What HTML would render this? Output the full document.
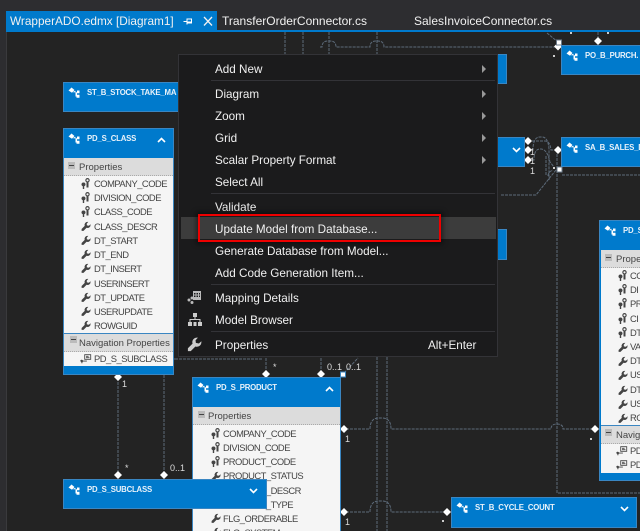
<!DOCTYPE html>
<html><head><meta charset="utf-8"><style>
html,body{margin:0;padding:0;background:#232323}
#r{position:relative;width:640px;height:531px;overflow:hidden;background:#232323;font-family:"Liberation Sans",sans-serif}
#r div,#r svg{position:absolute}
.top{left:0;top:0;width:640px;height:32px;background:#2d2d30}
.tl{left:0;top:32px;width:7px;height:499px;background:#2d2d30}
.tb{top:11px;height:20px;line-height:21px;font-size:12px;color:#f1f1f1;white-space:nowrap}
.e{background:#007acc;border:1px solid #3a86c2;box-sizing:border-box;overflow:hidden}
.t{left:23px;top:4px;font-weight:bold;font-size:7.800px;letter-spacing:-.2px;line-height:12px;color:#e8f2fa;white-space:nowrap}
.b{left:0;right:0;background:#f5f5f5}
.band{left:0;right:0;background:#dcdcdc;height:18px;color:#444;font-size:9.500px;line-height:19px;white-space:nowrap;border-bottom:1px dotted #aaa;box-sizing:border-box;padding-left:15px}
.row{color:#444;font-size:9.400px;line-height:14px;height:14px;white-space:nowrap;letter-spacing:-.5px}
.ic{width:10px;height:11px;fill:#444}
.m{left:178px;top:54px;width:320px;height:303px;background:#1b1b1c;border:1px solid #333337;box-sizing:border-box}
.mi{left:215px;margin-top:1px;color:#f1f1f1;font-size:11.700px;line-height:16px;height:16px;white-space:nowrap}
.sep{left:211px;width:284px;height:1px;background:#333337}
.ar{left:482px;width:0;height:0;border-left:4px solid #999;border-top:4px solid transparent;border-bottom:4px solid transparent}
.lb{color:#ddd;font-size:9px;line-height:10px;white-space:nowrap}
</style></head><body><div id="r">
<svg width="0" height="0"><defs>
<symbol id="w" viewBox="0 0 10 10"><path d="M6.600 .4a3 3 0 0 0-2.900 4L.6 7.500v1.900h1.900L5.600 6.300a3 3 0 0 0 4-2.900V2.800L7.900 4.300 5.900 3.900 5.700 2.200 7.300 .4z"/></symbol>
<symbol id="k" viewBox="0 0 10 11"><path d="M6.500 0a2.300 2.300 0 0 1 1 4.300V9.500H5.500V4.300A2.300 2.300 0 0 1 6.500 0zm0 1.200a1.100 1.100 0 1 0 0 2.200 1.100 1.100 0 0 0 0-2.200zM2.500 4.500a1.900 1.900 0 0 1 .7 3.700V11H1.800V8.200A1.900 1.900 0 0 1 2.500 4.500z"/></symbol>
<symbol id="n" viewBox="0 0 14 11"><path d="M5 .5h8v6.500H5zM6 1.500v4.500h6V1.500zM7 2.500h3v1H7zM7 4h4v1H7z M.5 7.500a1.800 1.800 0 0 1 3 .5H8v1H3.500a1.800 1.800 0 0 1-.7.700V11H1.600V9.600A1.800 1.800 0 0 1 .5 7.500z"/></symbol>
<symbol id="en" viewBox="0 0 12 12"><path fill="#fff" d="M3.500 .5L6.500 3 4 5.800 .5 3.500zM5.500 4.500l2-.7v1.400h1.500V3.500h2.500v2.800H9v1.500h2.500v3H8.500V9.500H7.500v-4.400L5.500 5.500z"/></symbol>
</defs></svg>
<div class="top"></div><div class="tl"></div>
<div style="left:6px;top:32px;width:1px;height:499px;background:#3a3a3d"></div>
<div style="left:6px;top:11px;width:211px;height:21px;background:#007acc"></div>
<div style="left:217px;top:30px;width:423px;height:2px;background:#007acc"></div>
<div class="tb" style="left:10px;font-size:11.800px">WrapperADO.edmx [Diagram1]</div>
<svg style="left:183px;top:16px" width="10" height="11" fill="none" stroke="#fff"><path d="M.5 5.500H4M4 2.500V8.500M4 3h4.500V7H4M4.500 6H8.500"/></svg>
<svg style="left:202px;top:16px" width="12" height="11" fill="none" stroke="#f1f1f1" stroke-width="1.300"><path d="M2 1l8 8.500M10 1L2 9.500"/></svg>
<div class="tb" style="left:222px">TransferOrderConnector.cs</div>
<div class="tb" style="left:414px">SalesInvoiceConnector.cs</div>

<svg style="left:0;top:0" width="640" height="531" fill="none" stroke="#5d6b7a" stroke-width="1" stroke-dasharray="3 1">
<path d="M285 32V54M303 32V54M329 32V54M377 32V54"/>
<path d="M320 47h2q0-6 6-6h2q6 0 6 6H370q0-6 6-6h2q6 0 6 6H556"/>
<path d="M547 33L559 43"/><path d="M598 32V40"/>
<path d="M532 141H545q5 0 6 9h4"/>
<path d="M532 150H533q0-13 7-13h2q6 0 7 12V180M532 160H534q0-11 6-11h1q6 0 9 13l4 5"/>
<path d="M546 156V176M557 150V493H640M562 175H640"/>
<path d="M556 170L536 195H500M548 176q0-4 5-6"/>
<path d="M118 378V475M164 359V475M164 359H178"/>
<path d="M175 359H262M266 358V372M321 358V372M344 373L358 358M377 357V531M387 357V531"/>
<path d="M346 429H370q0-11 9-11h3q9 0 9 11H551q0-5 6-5t6 5H593"/>
<path d="M346 512H370q0-11 9-11h3q9 0 9 11H445"/>
</svg>
<svg style="left:0;top:0" width="640" height="531" fill="#fff">
<path id="d" d="M558 42.500l4 4-4 4-4-4zM598 37l4 4-4 4-4-4zM528 137l4 4-4 4-4-4zM528 146l4 4-4 4-4-4zM528 156l4 4-4 4-4-4zM558 146l4 4-4 4-4-4zM118 373l4 4-4 4-4-4zM118 471l4 4-4 4-4-4zM164 471l4 4-4 4-4-4zM266 370l4 4-4 4-4-4zM321 370l4 4-4 4-4-4zM344 425l4 4-4 4-4-4zM344 508l4 4-4 4-4-4zM595 425l4 4-4 4-4-4zM447 508l4 4-4 4-4-4z"/>
<rect x="556.500" y="40" width="5" height="5" stroke="#6d7c8c"/><rect x="557" y="167" width="5" height="5" stroke="#6d7c8c"/><rect x="340.500" y="372" width="5" height="5" stroke="#3a86c2"/>
<path d="M553 55h2v2h-2zM570 32h2v2h-2zM607 32h2v2h-2zM553 167h2v2h-2zM590 438h2v2h-2zM442 520h2v2h-2z" fill="#ccc"/>
</svg>
<div class="lb" style="left:122px;top:379px">1</div><div class="lb" style="left:125px;top:463px">*</div><div class="lb" style="left:170px;top:463px">0..1</div>
<div class="lb" style="left:273px;top:362px">*</div><div class="lb" style="left:327px;top:362px">0..1</div><div class="lb" style="left:346px;top:362px">0..1</div>
<div class="lb" style="left:345px;top:434px">1</div><div class="lb" style="left:345px;top:517px">1</div>
<div class="lb" style="left:530px;top:147px">1</div><div class="lb" style="left:530px;top:156px">1</div><div class="lb" style="left:530px;top:166px">1</div>

<div class="e" style="left:63px;top:82px;width:118px;height:30px"><svg style="left:4px;top:4px" width="12" height="12"><use href="#en"/></svg><div class="t">ST_B_STOCK_TAKE_MA</div></div>
<div class="e" style="left:63px;top:128px;width:111px;height:247px"><svg style="left:4px;top:4px" width="12" height="12"><use href="#en"/></svg><div class="t">PD_S_CLASS</div>
<svg style="left:93px;top:8px" width="9" height="6" fill="none" stroke="#fff" stroke-width="1.600"><path d="M1 5l3.500-3.500L8 5"/></svg>
<div class="b" style="top:29px;height:208px"></div>
<div class="band" style="top:29px">Properties</div>
<svg style="left:4px;top:33px" width="7" height="7"><rect width="7" height="7" fill="#bbb"/><rect x="1" y="3" width="5" height="1" fill="#444"/></svg>
</div>
<div style="left:64px;top:333px;width:109px;height:1px;background:#3a86c2"></div>
<div class="band" style="left:64px;top:334px;width:109px;right:auto">Navigation Properties</div>
<svg style="left:70px;top:336px" width="7" height="7"><rect width="7" height="7" fill="#bbb"/><rect x="1" y="3" width="5" height="1" fill="#444"/></svg>
<div class="row" style="left:94px;top:177px">COMPANY_CODE</div>
<div class="row" style="left:94px;top:191px">DIVISION_CODE</div>
<div class="row" style="left:94px;top:205px">CLASS_CODE</div>
<div class="row" style="left:94px;top:220px">CLASS_DESCR</div>
<div class="row" style="left:94px;top:234px">DT_START</div>
<div class="row" style="left:94px;top:248px">DT_END</div>
<div class="row" style="left:94px;top:262px">DT_INSERT</div>
<div class="row" style="left:94px;top:277px">USERINSERT</div>
<div class="row" style="left:94px;top:291px">DT_UPDATE</div>
<div class="row" style="left:94px;top:305px">USERUPDATE</div>
<div class="row" style="left:94px;top:319px">ROWGUID</div>
<div class="row" style="left:94px;top:352px">PD_S_SUBCLASS</div>
<svg class="ic" style="left:81px;top:178px"><use href="#k"/></svg><svg class="ic" style="left:81px;top:192px"><use href="#k"/></svg><svg class="ic" style="left:81px;top:206px"><use href="#k"/></svg>
<svg class="ic" style="left:81px;top:221px"><use href="#w"/></svg><svg class="ic" style="left:81px;top:235px"><use href="#w"/></svg><svg class="ic" style="left:81px;top:249px"><use href="#w"/></svg><svg class="ic" style="left:81px;top:263px"><use href="#w"/></svg><svg class="ic" style="left:81px;top:278px"><use href="#w"/></svg><svg class="ic" style="left:81px;top:292px"><use href="#w"/></svg><svg class="ic" style="left:81px;top:306px"><use href="#w"/></svg><svg class="ic" style="left:81px;top:320px"><use href="#w"/></svg>
<svg style="left:80px;top:353px;fill:#444" width="12" height="11"><use href="#n"/></svg>

<div class="e" style="left:192px;top:377px;width:149px;height:160px"><svg style="left:4px;top:4px" width="12" height="12"><use href="#en"/></svg><div class="t">PD_S_PRODUCT</div>
<svg style="left:132px;top:8px" width="9" height="6" fill="none" stroke="#fff" stroke-width="1.600"><path d="M1 5l3.500-3.500L8 5"/></svg>
<div class="b" style="top:29px;height:130px"></div>
<div class="band" style="top:29px">Properties</div>
<svg style="left:5px;top:33px" width="7" height="7"><rect width="7" height="7" fill="#bbb"/><rect x="1" y="3" width="5" height="1" fill="#444"/></svg>
</div>
<div class="row" style="left:223px;top:427px">COMPANY_CODE</div>
<div class="row" style="left:223px;top:441px">DIVISION_CODE</div>
<div class="row" style="left:223px;top:455px">PRODUCT_CODE</div>
<div class="row" style="left:223px;top:469px">PRODUCT_STATUS</div>
<div class="row" style="left:223px;top:484px">PRODUCT_DESCR</div>
<div class="row" style="left:223px;top:498px">PRODUCT_TYPE</div>
<div class="row" style="left:223px;top:512px">FLG_ORDERABLE</div>
<div class="row" style="left:223px;top:526px">FLG_SYSTEM</div>
<svg class="ic" style="left:211px;top:428px"><use href="#k"/></svg><svg class="ic" style="left:211px;top:442px"><use href="#k"/></svg><svg class="ic" style="left:211px;top:456px"><use href="#k"/></svg>
<svg class="ic" style="left:211px;top:471px"><use href="#w"/></svg><svg class="ic" style="left:211px;top:513px"><use href="#w"/></svg><svg class="ic" style="left:211px;top:527px"><use href="#w"/></svg>

<div class="e" style="left:63px;top:479px;width:204px;height:30px"><svg style="left:4px;top:4px" width="12" height="12"><use href="#en"/></svg><div class="t">PD_S_SUBCLASS</div>
<svg style="left:185px;top:8px" width="9" height="6" fill="none" stroke="#fff" stroke-width="1.600"><path d="M1 1l3.500 3.500L8 1"/></svg></div>

<div class="e" style="left:451px;top:497px;width:186px;height:31px"><svg style="left:4px;top:4px" width="12" height="12"><use href="#en"/></svg><div class="t">ST_B_CYCLE_COUNT</div>
<svg style="left:168px;top:8px" width="9" height="6" fill="none" stroke="#fff" stroke-width="1.600"><path d="M1 1l3.500 3.500L8 1"/></svg></div>

<div class="e" style="left:561px;top:45px;width:90px;height:30px"><svg style="left:4px;top:4px" width="12" height="12"><use href="#en"/></svg><div class="t">PO_B_PURCH.</div></div>
<div class="e" style="left:561px;top:137px;width:90px;height:30px"><svg style="left:4px;top:4px" width="12" height="12"><use href="#en"/></svg><div class="t">SA_B_SALES_D</div></div>
<div class="e" style="left:400px;top:54px;width:107px;height:30px"></div>
<div class="e" style="left:400px;top:137px;width:125px;height:30px"><svg style="left:111px;top:9px" width="9" height="6" fill="none" stroke="#fff" stroke-width="1.600"><path d="M1 1l3.500 3.500L8 1"/></svg></div>
<div class="e" style="left:400px;top:229px;width:107px;height:31px"></div>

<div class="e" style="left:599px;top:220px;width:60px;height:261px"><svg style="left:4px;top:4px" width="12" height="12"><use href="#en"/></svg><div class="t">PD_S_</div>
<div class="b" style="top:29px;height:223px;left:1px"></div>
<div class="band" style="top:29px;left:1px">Properties</div>
<svg style="left:5px;top:33px" width="7" height="7"><rect width="7" height="7" fill="#bbb"/><rect x="1" y="3" width="5" height="1" fill="#444"/></svg>
<div style="left:1px;right:0;top:204px;height:1px;background:#3a86c2"></div>
<div class="band" style="top:205px;left:1px">Navig</div>
<svg style="left:5px;top:208px" width="7" height="7"><rect width="7" height="7" fill="#bbb"/><rect x="1" y="3" width="5" height="1" fill="#444"/></svg>
</div>
<div class="row" style="left:630px;top:269px">CO</div><div class="row" style="left:630px;top:283px">DI</div><div class="row" style="left:630px;top:297px">PR</div><div class="row" style="left:630px;top:312px">CI</div><div class="row" style="left:630px;top:326px">DT</div><div class="row" style="left:630px;top:340px">VA</div><div class="row" style="left:630px;top:354px">DT</div><div class="row" style="left:630px;top:368px">US</div><div class="row" style="left:630px;top:383px">DT</div><div class="row" style="left:630px;top:397px">US</div><div class="row" style="left:630px;top:411px">RC</div><div class="row" style="left:630px;top:444px">PD</div><div class="row" style="left:630px;top:458px">PD</div>
<svg class="ic" style="left:618px;top:270px"><use href="#k"/></svg><svg class="ic" style="left:618px;top:284px"><use href="#k"/></svg><svg class="ic" style="left:618px;top:298px"><use href="#k"/></svg><svg class="ic" style="left:618px;top:313px"><use href="#k"/></svg><svg class="ic" style="left:618px;top:327px"><use href="#k"/></svg>
<svg class="ic" style="left:618px;top:342px"><use href="#w"/></svg><svg class="ic" style="left:618px;top:356px"><use href="#w"/></svg><svg class="ic" style="left:618px;top:370px"><use href="#w"/></svg><svg class="ic" style="left:618px;top:385px"><use href="#w"/></svg><svg class="ic" style="left:618px;top:399px"><use href="#w"/></svg><svg class="ic" style="left:618px;top:413px"><use href="#w"/></svg>
<svg style="left:616px;top:445px;fill:#444" width="12" height="11"><use href="#n"/></svg><svg style="left:616px;top:459px;fill:#444" width="12" height="11"><use href="#n"/></svg>

<div class="m"></div>
<div class="mi" style="top:61px">Add New</div><div class="ar" style="top:65px"></div>
<div class="sep" style="top:80px"></div>
<div class="mi" style="top:86px">Diagram</div><div class="ar" style="top:90px"></div>
<div class="mi" style="top:108px">Zoom</div><div class="ar" style="top:112px"></div>
<div class="mi" style="top:130px">Grid</div><div class="ar" style="top:134px"></div>
<div class="mi" style="top:152px">Scalar Property Format</div><div class="ar" style="top:156px"></div>
<div class="mi" style="top:174px">Select All</div>
<div class="sep" style="top:193px"></div>
<div class="mi" style="top:199px">Validate</div>
<div style="left:181px;top:217px;width:315px;height:22px;background:#3c3c3c"></div>
<div style="left:198px;top:214px;width:243px;height:28px;border:2px solid #ee0000;box-sizing:border-box;box-shadow:0 0 5px 2px rgba(0,0,0,.45)"></div>
<div class="mi" style="top:221px">Update Model from Database...</div>
<div class="mi" style="top:243px">Generate Database from Model...</div>
<div class="mi" style="top:265px">Add Code Generation Item...</div>
<div class="sep" style="top:284px"></div>
<div class="mi" style="top:290px">Mapping Details</div>
<div class="mi" style="top:312px">Model Browser</div>
<div class="sep" style="top:331px"></div>
<div class="mi" style="top:337px">Properties</div>
<div class="mi" style="left:428px;top:337px">Alt+Enter</div>
<svg style="left:187px;top:291px" width="15" height="14" fill="#bbb"><path d="M6 0h8v9H6zM7 2v1.500h1.500V2zM9.500 2v1.500H11V2zM12 2v1.500h1V2zM7 4.500V6h1.500V4.500zM9.500 4.500V6H11V4.500zM12 4.500V6h1V4.500z"/><circle cx="2" cy="9" r="1.500"/><circle cx="5" cy="7" r="1.500"/><circle cx="5" cy="11.500" r="1.500"/></svg>
<svg style="left:188px;top:313px" width="14" height="13" fill="#ccc"><path d="M5 0h4v4H7.500v2H12.500v3H14v4H10V9h1.500V7H2.500v2H4v4H0V9h1.500V6h5V4H5zM5.500 9h3v4h-3z"/></svg>
<svg style="left:187px;top:337px;fill:#ccc" width="15" height="15"><use href="#w"/></svg>
</div></body></html>
